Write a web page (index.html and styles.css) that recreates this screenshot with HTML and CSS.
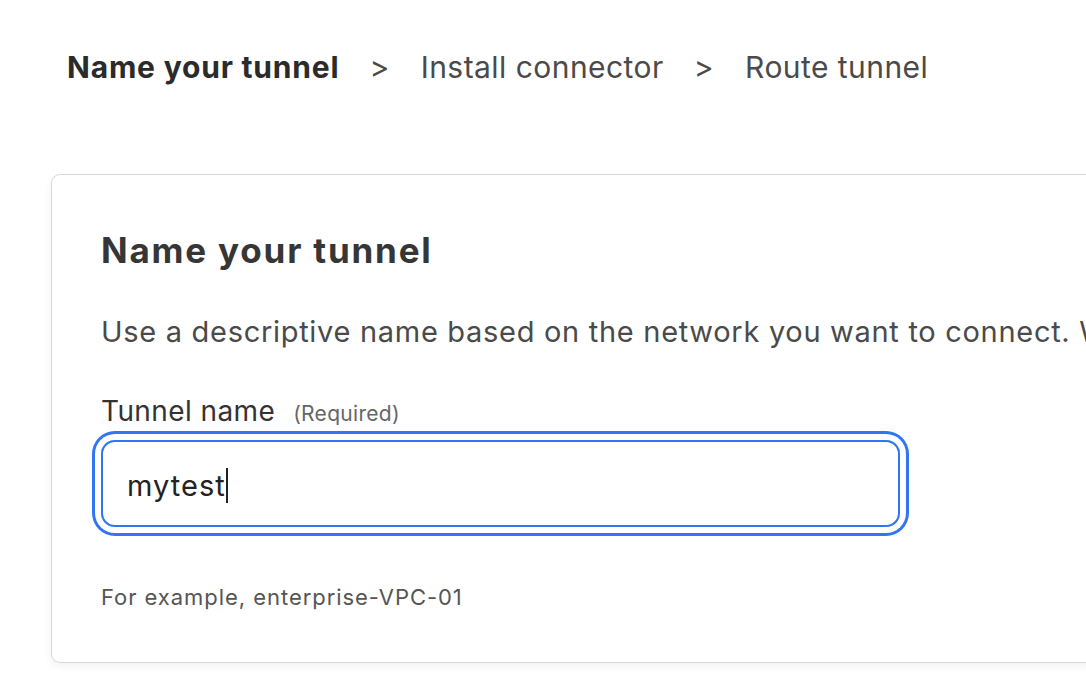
FILE: index.html
```html
<!DOCTYPE html>
<html lang="en">
<head>
    <meta charset="UTF-8">
    <meta name="viewport" content="width=device-width, initial-scale=1.0">
    <title>Create a tunnel</title>
    <link rel="stylesheet" href="styles.css">
</head>
<body>
    <div class="page">
        <div class="steps">
            <span class="step active">Name your tunnel</span><span class="sep">&gt;</span><span class="step">Install connector</span><span class="sep">&gt;</span><span class="step">Route tunnel</span>
        </div>

        <div class="card">
            <h2>Name your tunnel</h2>
            <p class="desc">Use a descriptive name based on the network you want to connect. We recommend including the environment.</p>
            <label class="label">Tunnel name<span class="req">(Required)</span></label>
            <div class="field">mytest<span class="caret"></span></div>
            <div class="hint">For example, enterprise-VPC-01</div>
        </div>
    </div>
</body>
</html>
```

FILE: styles.css
```css
body{
    margin: 0;
    background: #ffffff;
    font-family: Inter, 'Noto Sans', sans-serif;
    overflow: hidden;
    width: 1086px;
    height: 694px;
}

.page{
    padding-left: 51px;
}

.steps{
    padding: 47px 0 0 16px;
    font-size: 30px;
    line-height: 40px;
    color: #4a4a4a;
    white-space: nowrap;
    letter-spacing: 0.45px;
}

.step.active{
    font-weight: 700;
    color: #2b2b2b;
    letter-spacing: 0.8px;
}

.sep{
    margin: 0 31px 0 30px;
}

.card{
    margin-top: 87px;
    width: 1200px;
    box-sizing: border-box;
    border: 1px solid #d8d8d8;
    border-radius: 9px;
    background: #ffffff;
    box-shadow: 0 3px 10px rgba(0, 0, 0, 0.06);
    padding: 54px 0 51px 49px;
}

h2{
    margin: 0;
    font-size: 35px;
    line-height: 42px;
    font-weight: 700;
    color: #363636;
    letter-spacing: 1.8px;
}

.desc{
    margin: 43px 0 0;
    font-size: 29px;
    line-height: 36px;
    color: #4a4a4a;
    white-space: nowrap;
    letter-spacing: 0.7px;
}

.label{
    display: block;
    margin-top: 43px;
    font-size: 28px;
    line-height: 36px;
    color: #333333;
    letter-spacing: 0.4px;
}

.req{
    margin-left: 18px;
    font-size: 21px;
    line-height: 20px;
    color: #666666;
    letter-spacing: 0.3px;
}

.field{
    margin-top: 11px;
    width: 799px;
    height: 87px;
    box-sizing: border-box;
    border: 2px solid #3075f3;
    border-radius: 14px;
    box-shadow: 0 0 0 6px #ffffff, 0 0 0 9px #3075f3;
    padding: 3px 24px 0;
    display: flex;
    align-items: center;
    font-size: 29px;
    color: #222222;
    letter-spacing: 1.05px;
}

.caret{
    display: inline-block;
    width: 2px;
    height: 35px;
    background: #222222;
}

.hint{
    margin-top: 56px;
    font-size: 22px;
    line-height: 28px;
    color: #555555;
    letter-spacing: 0.95px;
}
```
